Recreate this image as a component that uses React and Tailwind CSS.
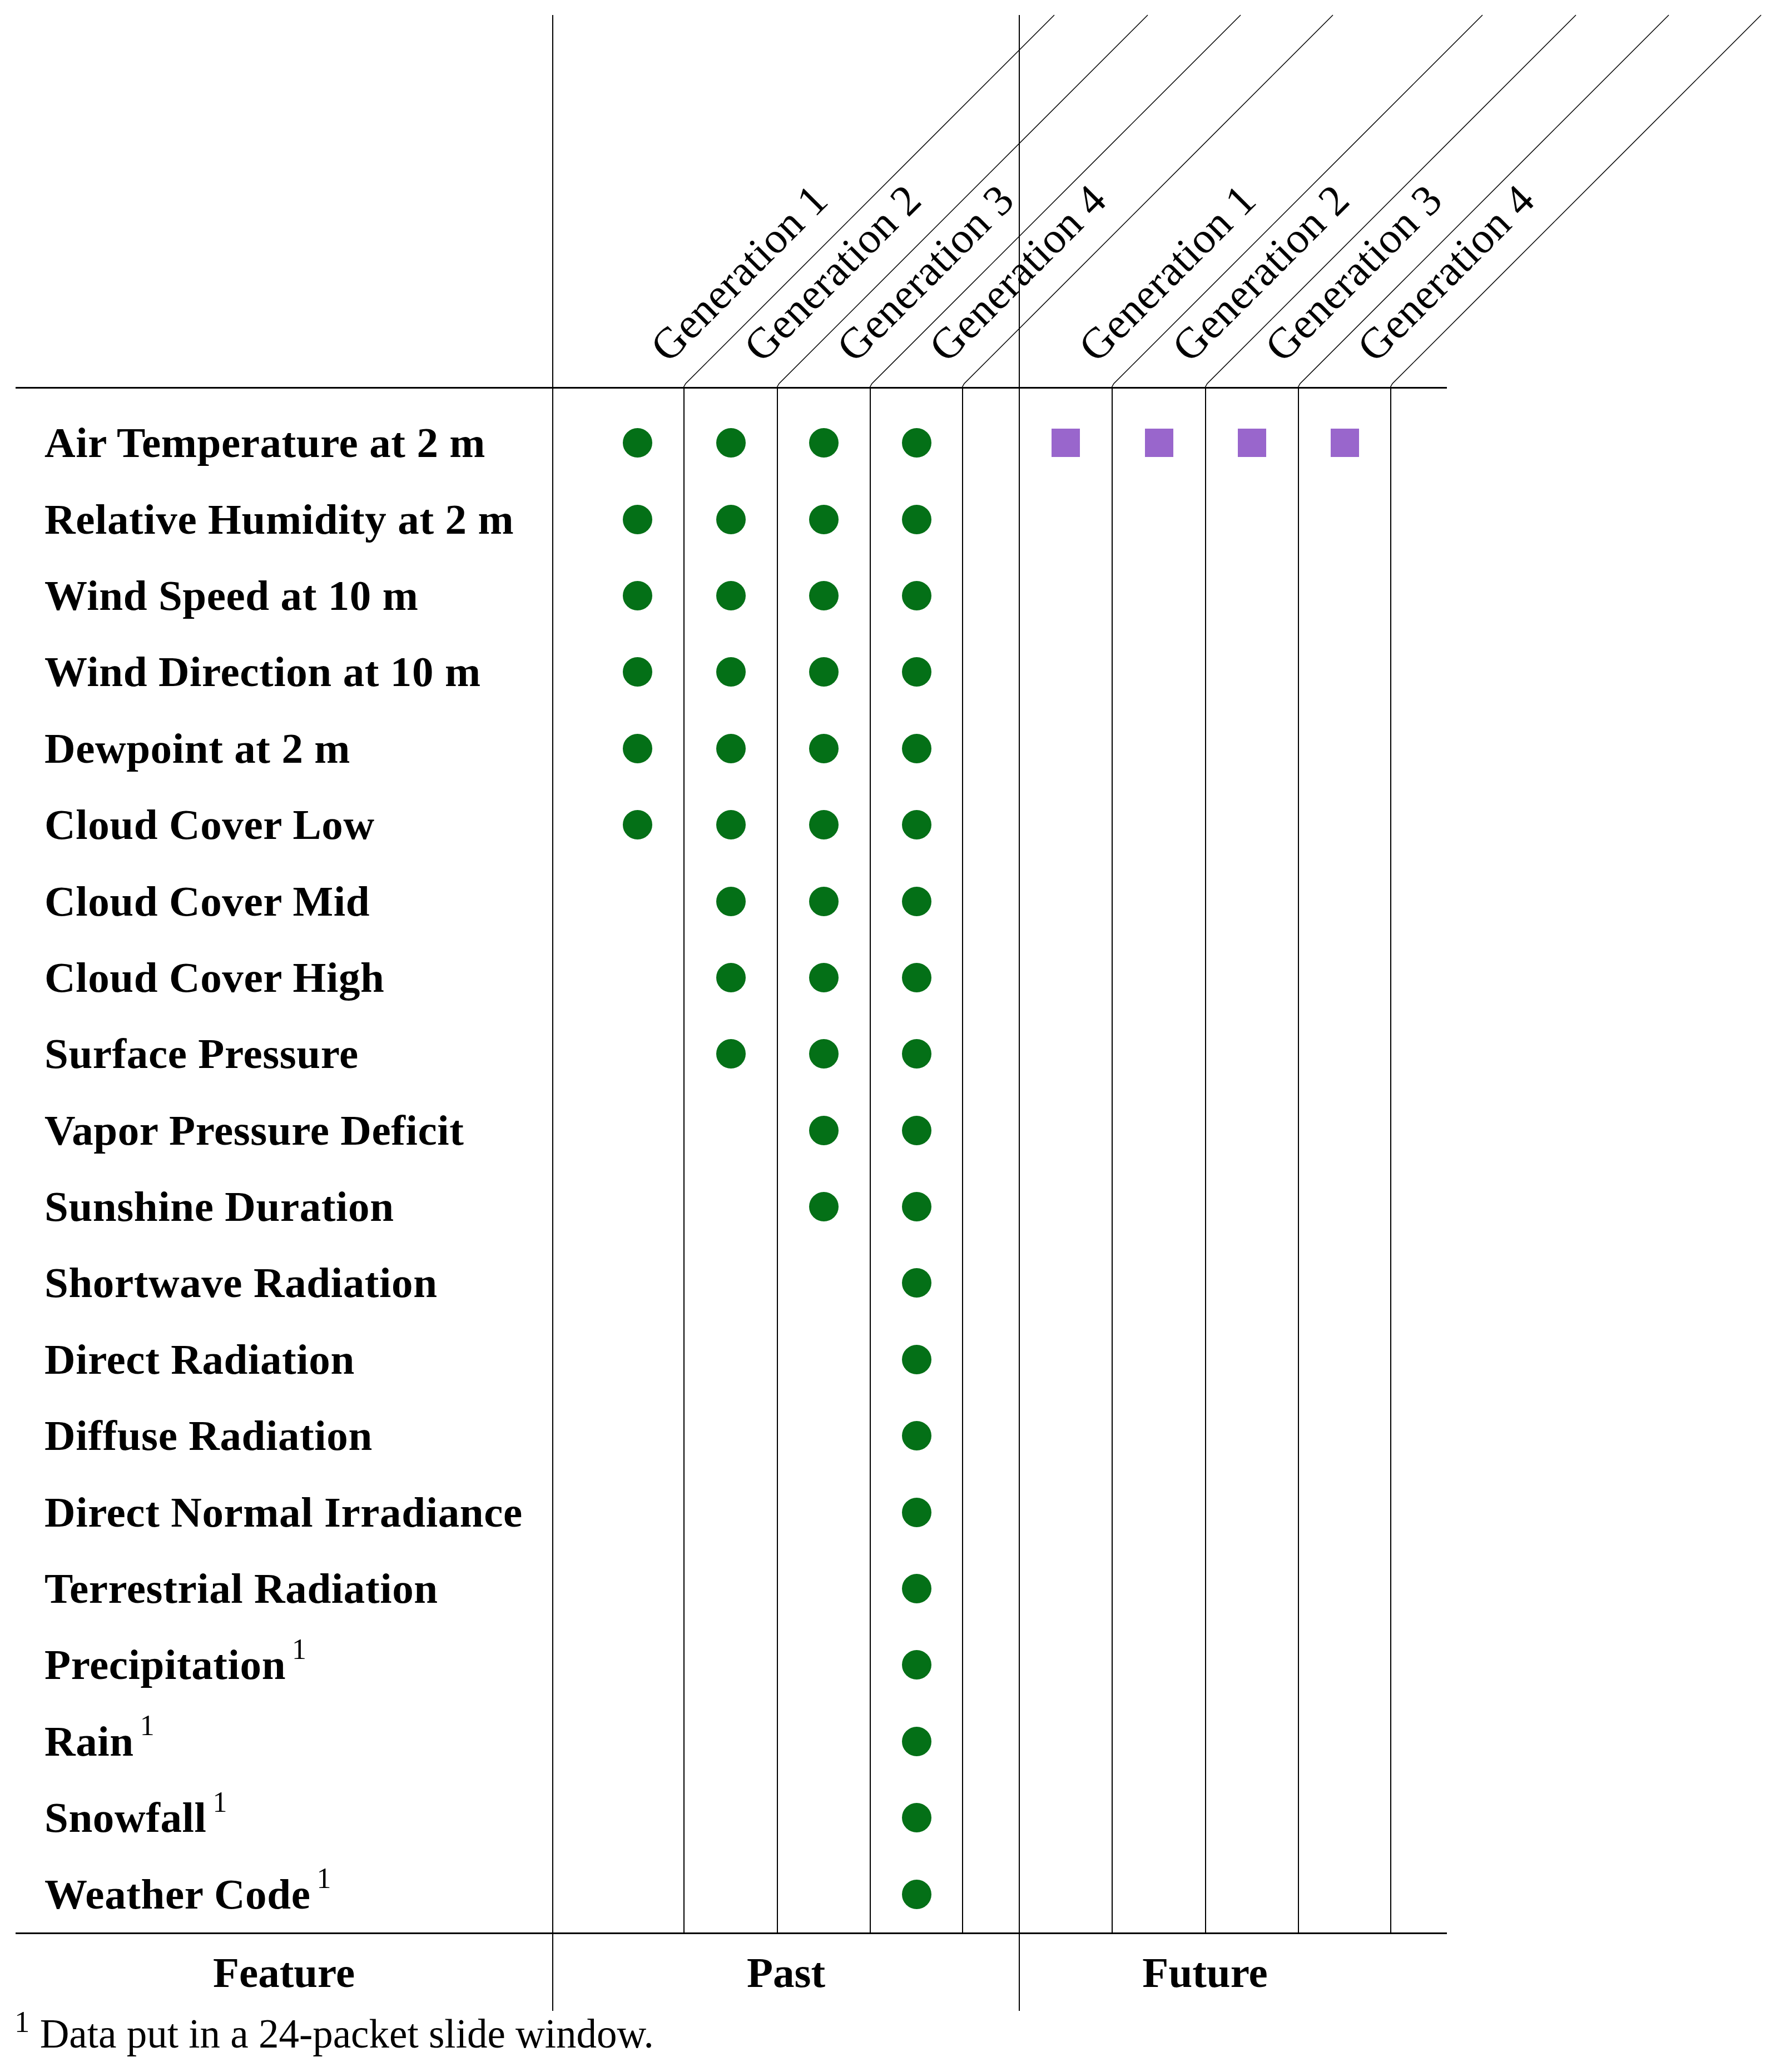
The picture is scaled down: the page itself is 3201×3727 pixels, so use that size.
import React from 'react';

// feature rows: `from` = first past generation that carries the feature
const FEATURES = [
  { name: 'Air Temperature at 2 m', from: 1, future: true },
  { name: 'Relative Humidity at 2 m', from: 1 },
  { name: 'Wind Speed at 10 m', from: 1 },
  { name: 'Wind Direction at 10 m', from: 1 },
  { name: 'Dewpoint at 2 m', from: 1 },
  { name: 'Cloud Cover Low', from: 1 },
  { name: 'Cloud Cover Mid', from: 2 },
  { name: 'Cloud Cover High', from: 2 },
  { name: 'Surface Pressure', from: 2 },
  { name: 'Vapor Pressure Deficit', from: 3 },
  { name: 'Sunshine Duration', from: 3 },
  { name: 'Shortwave Radiation', from: 4 },
  { name: 'Direct Radiation', from: 4 },
  { name: 'Diffuse Radiation', from: 4 },
  { name: 'Direct Normal Irradiance', from: 4 },
  { name: 'Terrestrial Radiation', from: 4 },
  { name: 'Precipitation', from: 4, note: true },
  { name: 'Rain', from: 4, note: true },
  { name: 'Snowfall', from: 4, note: true },
  { name: 'Weather Code', from: 4, note: true },
];

const GENS = [1, 2, 3, 4];

const COLS =
  'grid grid-cols-[965px_70px_166px_168px_167px_166px_102px_167px_168px_167px_166px_102px]';

const Dot = () => <span className="block w-[53px] h-[53px] rounded-full bg-[#047017]" />;
const Square = () => <span className="block w-[51px] h-[51px] bg-[#9966cc]" />;

const HeadCell = ({ label, border }) => (
  <div className={border ? 'relative border-l-2 border-black' : 'relative'}>
    <svg className="absolute left-full bottom-0 overflow-visible" width="669" height="669">
      <path d="M0 670 L4 663 L667 0" fill="none" stroke="#000" strokeWidth="1.5" />
    </svg>
    <div className="absolute left-[calc(100%-27px)] bottom-[28px] origin-[0_65px] -rotate-45 whitespace-nowrap text-[78px] tracking-[0.5px] leading-none">
      {label}
    </div>
  </div>
);

const BodyCol = ({ border, children }) => (
  <div className={border ? 'pt-[29px] border-l-2 border-black' : 'pt-[29px]'}>{children}</div>
);

const Cell = ({ children }) => (
  <div className="h-[137.4px] flex items-center justify-center">{children}</div>
);

export default function App() {
  return (
    <div className="w-[3201px] min-h-[3727px] bg-white text-black font-['Liberation_Serif',serif]">
      {/* Header */}
      <div className={`${COLS} ml-[28px] mt-[27px] h-[669px]`}>
        <div />
        <div className="border-l-2 border-black" />
        {GENS.map(g => (
          <HeadCell key={`p${g}`} label={`Generation ${g}`} border={false} />
        ))}
        <div />
        {GENS.map(g => (
          <HeadCell key={`f${g}`} label={`Generation ${g}`} border={g === 1} />
        ))}
        <div />
      </div>

      {/* Body */}
      <div className={`${COLS} ml-[28px] w-[2574px] border-y-[3px] border-black`}>
        <BodyCol border={false}>
          {FEATURES.map(f => (
            <div
              key={f.name}
              className="h-[137.4px] flex items-center pl-[52px] whitespace-nowrap font-bold text-[77px] tracking-[0.6px] leading-none"
            >
              {f.name}
              {f.note && (
                <>
                  {' '}
                  <sup className="ml-[11px] text-[52px] font-normal -top-[28px]">1</sup>
                </>
              )}
            </div>
          ))}
        </BodyCol>
        <BodyCol border />
        {GENS.map(g => (
          <BodyCol key={`pb${g}`} border={g !== 1}>
            {FEATURES.map(f => (
              <Cell key={f.name}>{f.from <= g && <Dot />}</Cell>
            ))}
          </BodyCol>
        ))}
        <BodyCol border />
        {GENS.map(g => (
          <BodyCol key={`fb${g}`} border>
            {FEATURES.map(f => (
              <Cell key={f.name}>{f.future && <Square />}</Cell>
            ))}
          </BodyCol>
        ))}
        <BodyCol border />
      </div>

      {/* Group labels */}
      <div className="ml-[28px] grid grid-cols-[965px_839px_770px] h-[138px] font-bold text-[77px] leading-none">
        <div className="pt-[31px] text-center">Feature</div>
        <div className="pt-[31px] text-center border-l-2 border-black">Past</div>
        <div className="pt-[31px] pr-[102px] text-center border-l-2 border-black">Future</div>
      </div>

      {/* Footnote */}
      <div className="mt-[5px] pl-[26px] text-[73px] leading-none whitespace-nowrap">
        <sup>1</sup> Data put in a 24-packet slide window.
      </div>
    </div>
  );
}
